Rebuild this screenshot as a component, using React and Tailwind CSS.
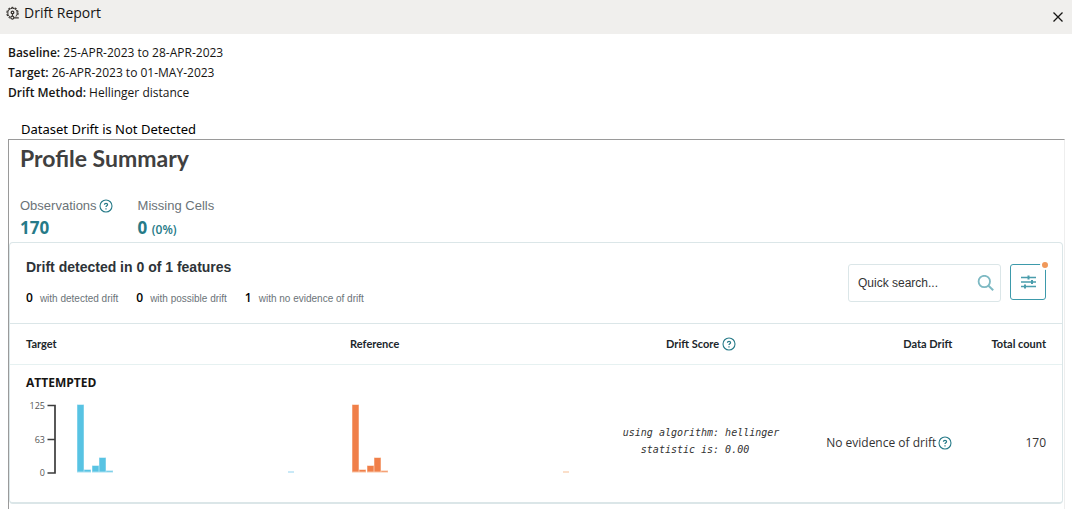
import React from 'react';

const stats = [
  { count: 0, label: 'with detected drift' },
  { count: 0, label: 'with possible drift' },
  { count: 1, label: 'with no evidence of drift' },
];

// x, y and height of every histogram bar
const bars = [
  { x: 0, y: 5, h: 67 },
  { x: 7, y: 70, h: 2 },
  { x: 15, y: 66, h: 6 },
  { x: 22, y: 58, h: 14 },
  { x: 29, y: 71, h: 1 },
];

const HelpIcon = () => (
  <svg className="inline-block size-[14px] shrink-0" viewBox="0 0 14 14" aria-hidden="true">
    <circle cx="7" cy="7" r="6" fill="none" stroke="#267a88" strokeWidth="1.1" />
    <path
      d="M5.4 5.8c0-2 3.2-1.9 3.2-.1 0 1.1-1.6 1.1-1.6 2.3M7 9.2v1.2"
      fill="none"
      stroke="#267a88"
      strokeWidth="1.2"
    />
  </svg>
);

const GearIcon = () => (
  <svg className="size-[14px]" viewBox="0 -1 14 14" fill="none" stroke="#3a3632" aria-hidden="true">
    <circle cx="6.5" cy="6" r="5.6" strokeWidth="1.2" strokeDasharray="2.2 1.3" />
    <circle cx="6.5" cy="6" r="4.7" strokeWidth="1" />
    <circle cx="6.5" cy="5.4" r="1.3" strokeWidth="1.3" />
    <path d="M4.4 10.9h9" stroke="#f0efed" strokeWidth="3" />
    <circle cx="6.3" cy="10.6" r="1.5" strokeWidth="1.1" />
    <path d="M7.8 10.9h5M6.5 7v2" strokeWidth="1.1" />
  </svg>
);

const Bars = ({ left, fill, edge, tail }) => (
  <g>
    {bars.map((bar) => (
      <g key={bar.x}>
        <rect x={left + bar.x} y={bar.y - 0.5} width="7" height={bar.h + 1} fill={edge} />
        <rect x={left + bar.x + 0.5} y={bar.y} width="6" height={bar.h - 0.5} fill={fill} />
      </g>
    ))}
    <rect x={left + 211} y="71" width="6" height="2" fill={tail} />
  </g>
);

const TargetChart = () => (
  <svg className="block h-[78px] w-[276px]" viewBox="0 0 276 78" role="img" aria-label="Target distribution">
    <g fontFamily="'Open Sans', sans-serif" fontSize="9" fill="#555" textAnchor="end">
      <text x="19" y="9">125</text>
      <text x="19" y="43">63</text>
      <text x="19" y="76">0</text>
    </g>
    <path d="M21.5 5.5H29V73H21.5M21.5 39.5H29" fill="none" stroke="#3c3c3c" strokeWidth="1.7" />
    <Bars left={51} fill="#58c3e3" edge="#a5def0" tail="#c9e9f7" />
  </svg>
);

const ReferenceChart = () => (
  <svg className="block h-[78px] w-[230px]" viewBox="0 0 230 78" role="img" aria-label="Reference distribution">
    <Bars left={2} fill="#f07f49" edge="#f9c3a4" tail="#fbdfca" />
  </svg>
);

const App = () => {
  return (
    <div className="flex h-screen flex-col overflow-hidden bg-white font-['Open_Sans',sans-serif] text-[#161513]">
      {/* Dialog header */}
      <header className="flex h-[34px] shrink-0 items-center justify-between bg-[#f0efed] pr-2 pl-[6px]">
        <h1 className="flex items-center gap-1 pb-2 text-[14px] leading-5">
          <GearIcon />
          Drift Report
        </h1>
        <button type="button" aria-label="Close" className="p-0">
          <svg className="size-[12px]" viewBox="0 0 12 12" stroke="#161513" strokeWidth="1.3" aria-hidden="true">
            <path d="M1.5 1.5l9 9M10.5 1.5l-9 9" />
          </svg>
        </button>
      </header>

      {/* Report parameters */}
      <div className="px-2 pt-[9px] text-[12px] leading-5">
        <p><strong className="font-semibold">Baseline:</strong> 25-APR-2023 to 28-APR-2023</p>
        <p><strong className="font-semibold">Target:</strong> 26-APR-2023 to 01-MAY-2023</p>
        <p><strong className="font-semibold">Drift Method:</strong> Hellinger distance</p>
      </div>
      <p className="px-[21px] pt-4 font-['Noto_Sans',sans-serif] text-[13px] leading-5 text-black">
        Dataset Drift is Not Detected
      </p>

      <main className="mr-[7px] ml-2 flex-1 border-t border-r border-l border-t-[#9a9a9a] border-r-[#eeeeee] border-l-[#9a9a9a]">
        <h2 className="px-[11px] pt-[2px] font-['Lato',sans-serif] text-[23px] leading-8 font-bold text-[#404040]">
          Profile Summary
        </h2>
        <dl className="flex gap-[25px] px-[11px] pt-[22px] font-['Liberation_Sans',sans-serif] text-[13px] text-[#6b7378]">
          <div>
            <dt className="flex items-center gap-[2px] leading-5">Observations <HelpIcon /></dt>
            <dd className="font-['Open_Sans',sans-serif] text-[17px] leading-6 font-bold text-[#267a88]">170</dd>
          </div>
          <div>
            <dt className="leading-5">Missing Cells</dt>
            <dd className="font-['Open_Sans',sans-serif] text-[17px] leading-6 font-bold text-[#267a88]">
              0 <span className="text-[12px] font-semibold">(0%)</span>
            </dd>
          </div>
        </dl>

        <section className="mr-px rounded border border-b-2 border-[#dbe6e8]">
          <div className="flex h-20 items-center justify-between px-4">
            <div>
              <h3 className="font-['Liberation_Sans',sans-serif] text-[14px] leading-5 font-bold text-[#2d3338]">
                Drift detected in 0 of 1 features
              </h3>
              <ul className="flex gap-[18px] pt-[11px]">
                {stats.map((stat) => (
                  <li key={stat.label} className="flex items-baseline gap-[7px] leading-5">
                    <span className="text-[12px] font-semibold text-black">{stat.count}</span>
                    <span className="font-['Liberation_Sans',sans-serif] text-[10px] text-[#6b7378]">{stat.label}</span>
                  </li>
                ))}
              </ul>
            </div>
            <div className="flex gap-[9px]">
              <label className="flex h-[38px] w-[153px] items-center rounded-[3px] border border-[#dbe6e8] pr-[6px] pl-[9px]">
                <input
                  type="text"
                  aria-label="Quick search"
                  placeholder="Quick search..."
                  className="min-w-0 flex-1 bg-transparent font-['Liberation_Sans',sans-serif] text-[12px] outline-none placeholder:text-[#333]"
                />
                <svg className="size-[17px]" viewBox="0 0 17 17" fill="none" stroke="#7db9c3" aria-hidden="true">
                  <circle cx="7.3" cy="6.5" r="5.7" strokeWidth="1.8" />
                  <path d="M11.5 10.7l4.7 4.5" strokeWidth="2" />
                </svg>
              </label>
              <button
                type="button"
                aria-label="Filters"
                className="relative flex size-9 items-center justify-center rounded-[3px] border border-[#3d9aab]"
              >
                <svg className="h-[14px] w-[15px]" viewBox="0 0 15 14" stroke="#4a9dac" strokeWidth="1.3" aria-hidden="true">
                  <path d="M0 2.5h15M0 7h15M0 11.5h15" />
                  <path d="M7.5 .5v4M11 5v4M4 9.5v4" strokeWidth="2" />
                </svg>
                <span className="absolute -top-[5px] -right-[5px] size-[10px] rounded-full border-2 border-white bg-[#f0985a]" />
              </button>
            </div>
          </div>

          <table className="w-full table-fixed border-t border-[#dbe6e8] text-left">
            <thead>
              <tr className="h-[41px] border-b border-[#e6f1f1] font-['Lato',sans-serif] text-[11px] text-[#20262b]">
                <th className="w-[31%] px-4 font-bold">Target</th>
                <th className="w-[25%] pl-[14px] font-bold">Reference</th>
                <th className="w-[19%] pl-1 text-center font-bold">
                  <span className="inline-flex items-center gap-[3px]">Drift Score <HelpIcon /></span>
                </th>
                <th className="w-[16%] pr-[15px] text-right font-bold">Data Drift</th>
                <th className="w-[9%] pr-4 text-right font-bold">Total count</th>
              </tr>
            </thead>
            <tbody>
              <tr className="h-[137px]">
                <td className="px-4 pt-2 align-top">
                  <div className="text-[12px] leading-5 font-bold">ATTEMPTED</div>
                  <div className="pt-[7px]"><TargetChart /></div>
                </td>
                <td className="pt-[35px] pl-[14px] align-top"><ReferenceChart /></td>
                <td className="pt-4 pl-1">
                  <div className="text-center font-['DejaVu_Sans_Mono',monospace] text-[10px] leading-[17px] whitespace-pre text-[#333] italic">
                    {'using algorithm: hellinger\nstatistic is: 0.00  '}
                  </div>
                </td>
                <td className="pt-5 pr-[15px] text-right text-[12px] whitespace-nowrap text-[#333]">
                  <span className="inline-flex items-center gap-[2px]">No evidence of drift <HelpIcon /></span>
                </td>
                <td className="pt-5 pr-4 text-right text-[12px] text-[#333]">170</td>
              </tr>
            </tbody>
          </table>
        </section>
      </main>
    </div>
  );
};

export default App;
